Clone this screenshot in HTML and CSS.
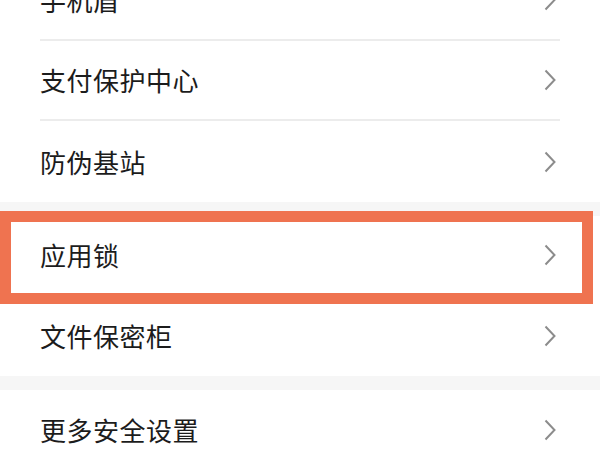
FILE: index.html
```html
<!DOCTYPE html>
<html lang="zh-CN">

<head>
    <meta charset="UTF-8">
    <meta name="viewport" content="width=device-width, initial-scale=1.0">
    <title>安全设置</title>
    <link rel="stylesheet" href="styles.css">
</head>

<body>
    <div class="settings">
        <div class="group first-group">
            <a href="#" class="item">
                <span class="label">手机盾</span>
                <svg class="arrow" viewBox="0 0 12 22"><path d="M1.5 1.5 L10.5 11 L1.5 20.5" /></svg>
            </a>
            <a href="#" class="item">
                <span class="label">支付保护中心</span>
                <svg class="arrow" viewBox="0 0 12 22"><path d="M1.5 1.5 L10.5 11 L1.5 20.5" /></svg>
            </a>
            <a href="#" class="item">
                <span class="label">防伪基站</span>
                <svg class="arrow" viewBox="0 0 12 22"><path d="M1.5 1.5 L10.5 11 L1.5 20.5" /></svg>
            </a>
        </div>

        <div class="group">
            <a href="#" class="item highlighted">
                <span class="label">应用锁</span>
                <svg class="arrow" viewBox="0 0 12 22"><path d="M1.5 1.5 L10.5 11 L1.5 20.5" /></svg>
            </a>
            <a href="#" class="item">
                <span class="label">文件保密柜</span>
                <svg class="arrow" viewBox="0 0 12 22"><path d="M1.5 1.5 L10.5 11 L1.5 20.5" /></svg>
            </a>
        </div>

        <div class="group">
            <a href="#" class="item">
                <span class="label">更多安全设置</span>
                <svg class="arrow" viewBox="0 0 12 22"><path d="M1.5 1.5 L10.5 11 L1.5 20.5" /></svg>
            </a>
        </div>
    </div>
</body>

</html>
```

FILE: styles.css
```css
* {
    margin: 0;
    padding: 0;
    box-sizing: border-box;
}

body {
    background-color: #ffffff;
    font-family: "Noto Sans CJK SC", "Noto Sans", sans-serif;
    width: 600px;
    height: 450px;
    overflow: hidden;
}

.settings {
    display: flex;
    flex-direction: column;
    gap: 14px;
    background-color: #f6f6f6;
    margin-top: -39px;
}

.group {
    background-color: #ffffff;
    display: flex;
    flex-direction: column;
}

.item {
    position: relative;
    display: flex;
    align-items: center;
    justify-content: space-between;
    height: 80px;
    margin: 0 40px;
    padding-right: 4px;
    text-decoration: none;
    color: #1c1c1c;
    border-bottom: 2px solid #ececec;
}

.item:last-child {
    border-bottom: none;
}

.first-group .item:last-child {
    height: 81px;
}

.label {
    font-size: 26px;
    line-height: 1;
    letter-spacing: 0.5px;
}

.arrow {
    width: 12px;
    height: 22px;
    fill: none;
    stroke: #8c8c8c;
    stroke-width: 2;
}

/* annotation box around the selected row */
.highlighted::after {
    content: "";
    position: absolute;
    top: -5px;
    bottom: -10px;
    left: -40px;
    right: -33px;
    border: 11px solid #ef7350;
    pointer-events: none;
}
```
